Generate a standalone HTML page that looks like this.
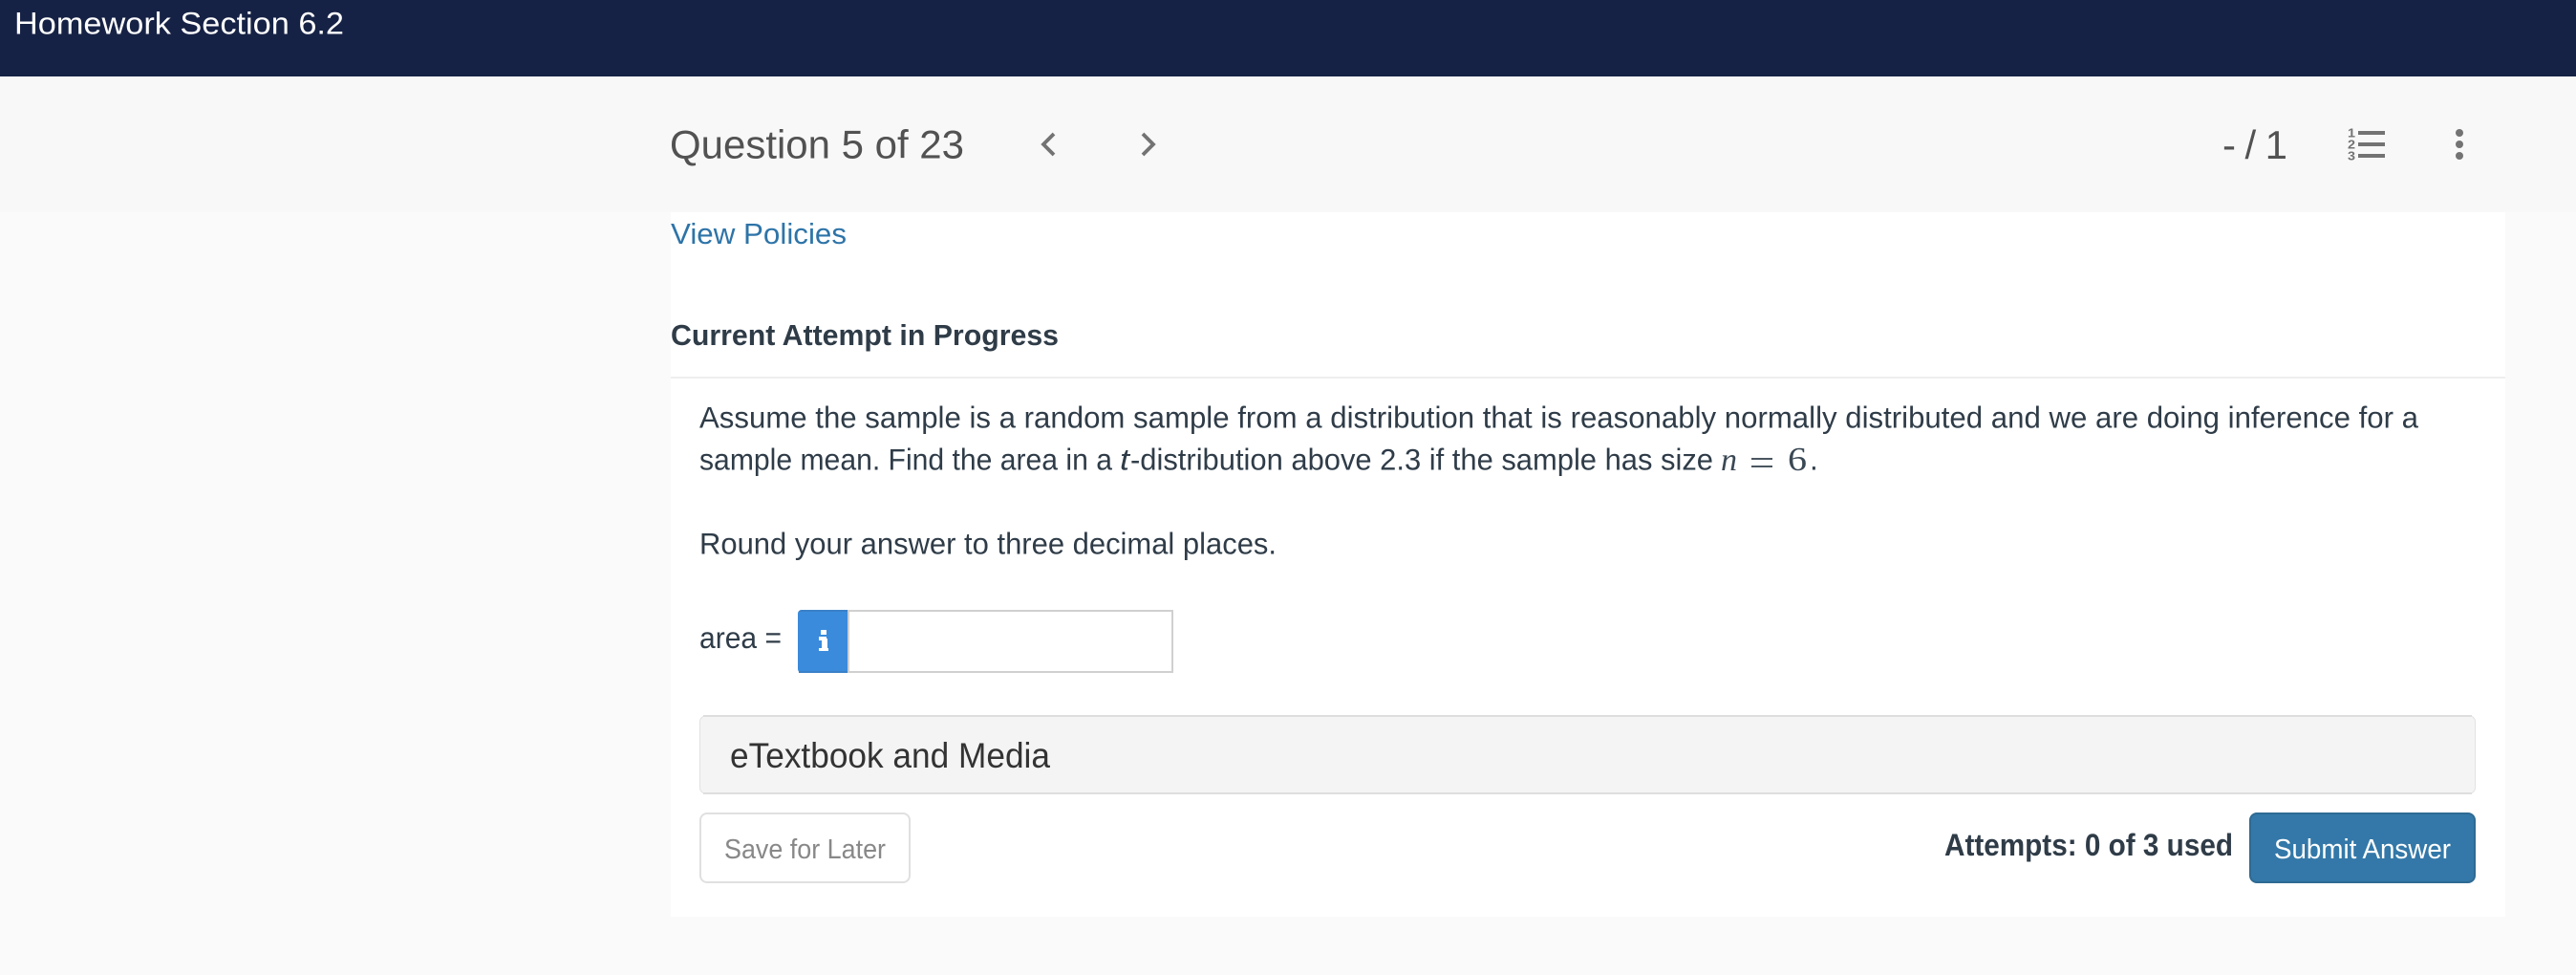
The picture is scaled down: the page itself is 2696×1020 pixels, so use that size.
<!DOCTYPE html>
<html lang="en">
<head>
<meta charset="utf-8">
<title>Homework Section 6.2</title>
<style>
html,body{margin:0;padding:0;background:#fafafa;width:2696px;height:1020px;overflow:hidden}
svg{display:block}
text{font-family:"Liberation Sans",sans-serif;}
.b{fill:#2f3c48;font-size:31.5px}
</style>
</head>
<body>
<svg xmlns="http://www.w3.org/2000/svg" width="2696" height="1020" viewBox="0 0 2696 1020">
<rect x="0" y="0" width="2696" height="1020" fill="#fafafa"/>
<rect x="0" y="0" width="2696" height="80" fill="#162245"/>
<rect x="0" y="80" width="2696" height="142" fill="#f8f8f8"/>
<rect x="702" y="222" width="1920" height="737" fill="#ffffff"/>
<rect x="702" y="394" width="1920" height="2" fill="#eeeeee"/>

<text x="15" y="35.500" font-size="32" fill="#ffffff" textLength="345" lengthAdjust="spacingAndGlyphs">Homework Section 6.2</text>
<text x="701" y="165.500" font-size="42" fill="#525252" textLength="308" lengthAdjust="spacingAndGlyphs">Question 5 of 23</text>

<path d="M1103 140L1092 151L1103 162" fill="none" stroke="#737373" stroke-width="3.8"/>
<path d="M1196 140L1207 151L1196 162" fill="none" stroke="#737373" stroke-width="3.8"/>

<text x="2326" y="166" font-size="42" fill="#525252" textLength="68" lengthAdjust="spacing">- / 1</text>

<text x="2457" y="143.500" font-size="12.500" font-weight="700" fill="#737373" textLength="8" lengthAdjust="spacingAndGlyphs">1</text>
<text x="2457" y="155.500" font-size="12.500" font-weight="700" fill="#737373" textLength="8" lengthAdjust="spacingAndGlyphs">2</text>
<text x="2457" y="167.500" font-size="12.500" font-weight="700" fill="#737373" textLength="8" lengthAdjust="spacingAndGlyphs">3</text>
<rect x="2468" y="137" width="28" height="4" fill="#737373"/>
<rect x="2468" y="149" width="28" height="4" fill="#737373"/>
<rect x="2468" y="161" width="28" height="4" fill="#737373"/>
<circle cx="2574" cy="139" r="4" fill="#737373"/>
<circle cx="2574" cy="151" r="4" fill="#737373"/>
<circle cx="2574" cy="163" r="4" fill="#737373"/>

<text x="702" y="255" font-size="31" fill="#2e74a8" textLength="184" lengthAdjust="spacingAndGlyphs">View Policies</text>
<text x="702" y="361" font-size="31" font-weight="700" fill="#2f3c48" textLength="406" lengthAdjust="spacingAndGlyphs">Current Attempt in Progress</text>

<text class="b" x="732" y="447.500" textLength="1799" lengthAdjust="spacingAndGlyphs">Assume the sample is a random sample from a distribution that is reasonably normally distributed and we are doing inference for a</text>
<text class="b" x="732" y="491.500" textLength="432" lengthAdjust="spacingAndGlyphs">sample mean. Find the area in a</text>
<text class="b" x="1172" y="491.500" font-style="italic" textLength="10" lengthAdjust="spacingAndGlyphs">t</text>
<text class="b" x="1183" y="491.500" textLength="610" lengthAdjust="spacingAndGlyphs">-distribution above 2.3 if the sample has size</text>
<text x="1801" y="492" font-size="34" fill="#3a4854" font-style="italic" style="font-family:'Liberation Serif',serif" textLength="17" lengthAdjust="spacingAndGlyphs">n</text>
<rect x="1833" y="479" width="22" height="2" fill="#4a5660"/>
<rect x="1833" y="487" width="22" height="2" fill="#4a5660"/>
<text x="1871" y="492" font-size="35" fill="#3a4854" style="font-family:'Liberation Serif',serif" textLength="20" lengthAdjust="spacingAndGlyphs">6</text>
<text class="b" x="1894" y="491.500">.</text>

<text class="b" x="732" y="579.500" textLength="604" lengthAdjust="spacingAndGlyphs">Round your answer to three decimal places.</text>
<text class="b" x="732" y="678" textLength="86" lengthAdjust="spacingAndGlyphs">area =</text>

<path d="M839 638H887V704H839a4 4 0 0 1-4-4V642a4 4 0 0 1 4-4z" fill="#3a8bdc"/>
<path d="M839 638H887V640H835.500V642a4 4 0 0 1 3.500-4z" fill="#3a80c8"/>
<rect x="836" y="702" width="51" height="2" fill="#3a80c8"/>
<rect x="859" y="659" width="6" height="5" fill="#ffffff"/>
<rect x="857" y="666" width="8" height="4" fill="#ffffff"/>
<rect x="860" y="668" width="6" height="11" fill="#ffffff"/>
<rect x="857" y="678" width="10" height="3" fill="#ffffff"/>
<rect x="888" y="639" width="339" height="64" fill="#ffffff" stroke="#d0d0d0" stroke-width="2"/>

<rect x="732.500" y="749" width="1858" height="81" rx="6" fill="#f4f4f4" stroke="#e2e2e2" stroke-width="1"/>
<rect x="736" y="748" width="1851" height="2" fill="#dedede"/>
<rect x="736" y="829" width="1851" height="2" fill="#dedede"/>
<text x="764" y="803" font-size="37" fill="#333333" textLength="335" lengthAdjust="spacingAndGlyphs">eTextbook and Media</text>

<rect x="733" y="851" width="219" height="72" rx="7" fill="#ffffff" stroke="#e0e0e0" stroke-width="2"/>
<text x="758" y="898" font-size="29" fill="#888888" textLength="169" lengthAdjust="spacingAndGlyphs">Save for Later</text>

<text x="2035" y="895" font-size="32" font-weight="700" fill="#2f3c48" textLength="302" lengthAdjust="spacingAndGlyphs">Attempts: 0 of 3 used</text>
<rect x="2355" y="851" width="235" height="72" rx="7" fill="#3378a8" stroke="#2e6a93" stroke-width="2"/>
<text x="2380" y="898" font-size="29" fill="#ffffff" textLength="185" lengthAdjust="spacingAndGlyphs">Submit Answer</text>
</svg>
</body>
</html>
